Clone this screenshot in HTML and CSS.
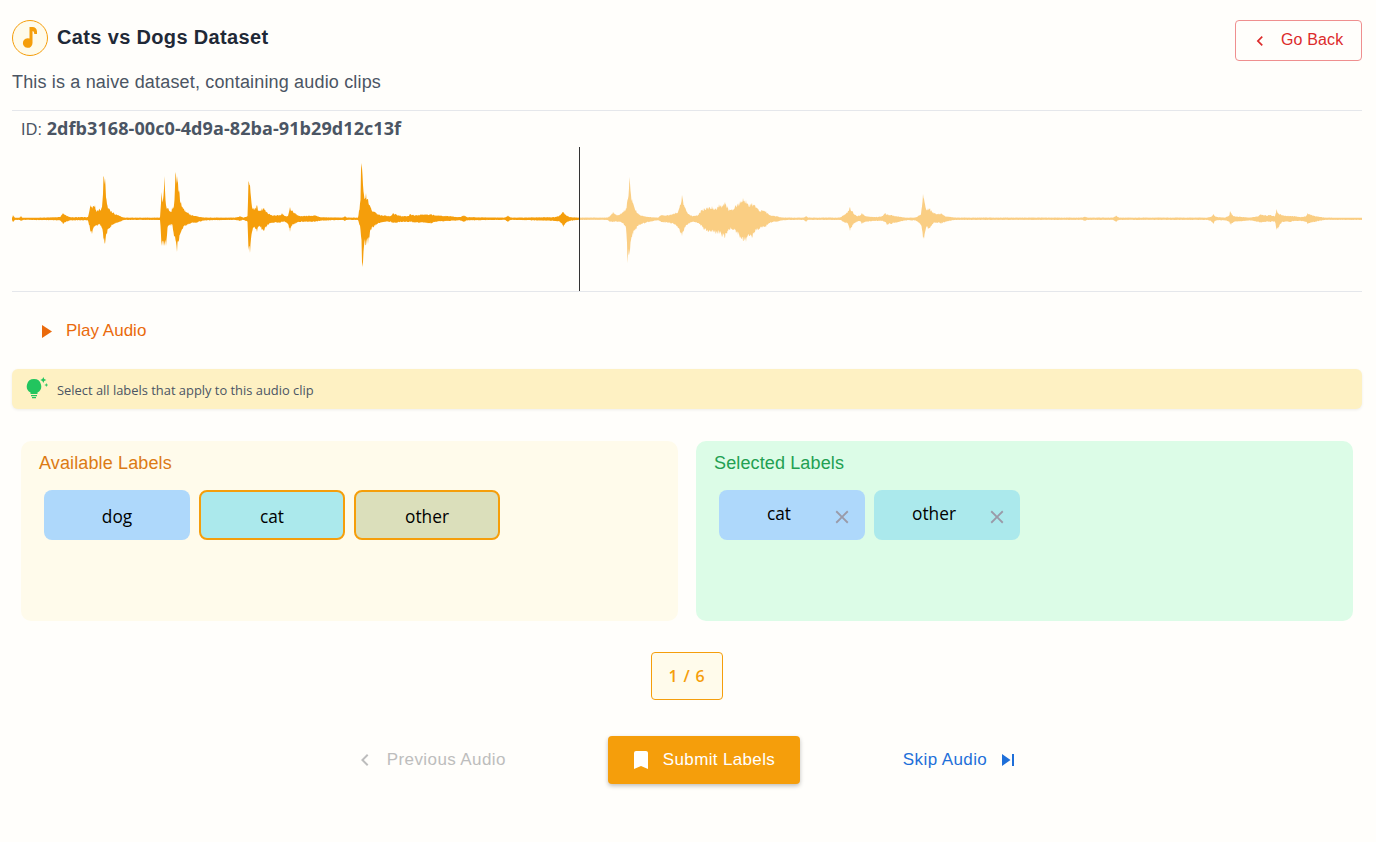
FILE: index.html
```html
<!DOCTYPE html>
<html lang="en">
<head>
<meta charset="utf-8">
<title>Cats vs Dogs Dataset</title>
<link rel="stylesheet" href="styles.css">
</head>
<body>
<main class="page">
  <header class="head">
    <div class="head-main">
      <div class="title-row">
        <span class="avatar"><svg viewBox="0 0 24 24" class="i-note"><path d="M11.500 1h3a4.500 4.500 0 0 1 4.500 4.500V8h-2.800V7.200A2.200 2.200 0 0 0 14.500 5V17a4.800 4.800 0 1 1-3-4.400z"/></svg></span>
        <h1 class="title">Cats vs Dogs Dataset</h1>
      </div>
      <p class="desc">This is a naive dataset, containing audio clips</p>
    </div>
    <button class="back"><svg viewBox="0 0 24 24" class="i-back"><path d="M15.41 16.58L10.83 12l4.58-4.59L14 6l-6 6 6 6z"/></svg><span>Go Back</span></button>
  </header>

  <section class="audio">
    <div class="clip-id">ID: <b>2dfb3168-00c0-4d9a-82ba-91b29d12c13f</b></div>
    <div class="wave">
      <svg id="wave" class="wave-svg" viewBox="12 147 1350 144" preserveAspectRatio="none"></svg>
      <div class="cursor"></div>
    </div>
  </section>

  <button class="play"><svg viewBox="0 0 10 13" class="i-play"><path d="M0 0v13l10-6.500z"/></svg><span>Play Audio</span></button>

  <div class="hint">
    <svg viewBox="0 0 22 24" class="i-bulb"><path class="bulb" d="M8 3a7.200 7.200 0 0 0-3.500 13.500V18h7v-1.500A7.200 7.200 0 0 0 8 3zM5 19h6v1.200H5zM6 21h4v1.200H6z"/><path class="bulb" d="M17.300 1l.9 2.100 2.100.9-2.100.9-.9 2.100-.9-2.100-2.100-.9 2.100-.9zM20.300 7l.6 1.400 1.400.6-1.400.6-.6 1.400-.6-1.400-1.400-.6 1.400-.6z"/></svg>
    <span>Select all labels that apply to this audio clip</span>
  </div>

  <section class="boards">
    <div class="board board-a">
      <h2 class="board-title">Available Labels</h2>
      <div class="chips">
        <button class="chip c-blue">dog</button>
        <button class="chip c-cyan picked">cat</button>
        <button class="chip c-olive picked">other</button>
      </div>
    </div>
    <div class="board board-s">
      <h2 class="board-title">Selected Labels</h2>
      <div class="chips">
        <div class="chip tag c-blue"><span>cat</span><svg viewBox="0 0 24 24" class="i-x"><path d="M19 6.41L17.59 5 12 10.590 6.410 5 5 6.410 10.590 12 5 17.590 6.410 19 12 13.410 17.590 19 19 17.590 13.410 12z"/></svg></div>
        <div class="chip tag c-cyan"><span>other</span><svg viewBox="0 0 24 24" class="i-x"><path d="M19 6.41L17.59 5 12 10.590 6.410 5 5 6.410 10.590 12 5 17.590 6.410 19 12 13.410 17.590 19 19 17.590 13.410 12z"/></svg></div>
      </div>
    </div>
  </section>

  <div class="counter-row"><div class="counter">1 / 6</div></div>

  <nav class="actions">
    <button class="act prev"><svg viewBox="0 0 24 24" class="i-24"><path d="M15.41 16.58L10.83 12l4.58-4.59L14 6l-6 6 6 6z"/></svg><span>Previous Audio</span></button>
    <button class="submit"><svg viewBox="0 0 24 24" class="i-24"><path d="M17 3H7a2 2 0 0 0-2 2v16l7-3 7 3V5c0-1.110-.9-2-2-2z"/></svg><span>Submit Labels</span></button>
    <button class="act skip"><span>Skip Audio</span><svg viewBox="0 0 24 24" class="i-24"><path d="M16 18h2V6h-2M6 18l8.500-6L6 6z"/></svg></button>
  </nav>
</main>
<script src="waveform.js"></script>
</body>
</html>
```
FILE: styles.css
```css
* { box-sizing: border-box; }
html, body { margin: 0; height: 100%; overflow: hidden; }
body { background: #fffefb; font-family: "Liberation Sans", Arial, sans-serif; color: #1f2937; }
button { font: inherit; background: none; border: 0; padding: 0; cursor: pointer; }
svg { display: block; fill: currentColor; }

.page { padding: 20px 14px 0 12px; }

.head { display: flex; justify-content: space-between; align-items: flex-start; height: 91px; border-bottom: 1px solid #e5e7eb; }
.title-row { display: flex; align-items: center; gap: 9px; height: 36px; }
.avatar { width: 36px; height: 36px; border: 1px solid #f59e0b; border-radius: 50%; background: #fffbeb; display: flex; align-items: center; justify-content: center; color: #f59e0b; }
.i-note { width: 24px; height: 24px; }
.title { margin: 0; padding-bottom: 2px; font-size: 20px; font-weight: 700; line-height: 34px; letter-spacing: .35px; color: #1f2937; }
.desc { margin: 13px 0 0; font-size: 18px; line-height: 26px; letter-spacing: .165px; color: #4b5563; }

.back { width: 127px; height: 41px; border: 1px solid #ef8f8f; border-radius: 4px; color: #dc2b2b; display: flex; align-items: center; padding: 0 0 2px 14px; font-size: 16px; letter-spacing: .15px; }
.i-back { width: 20px; height: 20px; margin: 2px 11px 0 0; }

.audio { border-bottom: 1px solid #e5e7eb; }
.clip-id { height: 36px; padding: 6px 0 0 9px; font-size: 16px; line-height: 22px; letter-spacing: .2px; color: #4b5563; }
.clip-id b { font-family: "Open Sans", "Noto Sans", sans-serif; font-size: 18px; font-weight: 700; letter-spacing: .08px; }
.wave { position: relative; height: 144px; }
.wave-svg { width: 100%; height: 100%; }
.cursor { position: absolute; left: 567px; top: 0; bottom: 0; width: 1px; background: #333; }

.play { display: flex; align-items: center; gap: 14px; margin: 28px 0 0 30px; height: 22px; color: #ea6a0c; font-size: 17px; }
.i-play { width: 10px; height: 13px; }

.hint { display: flex; align-items: center; gap: 9px; height: 40px; margin-top: 27px; padding-left: 14px; background: #fef1c3; border-radius: 6px; box-shadow: 0 1px 3px rgba(0,0,0,.07); font-family: "Open Sans", "Noto Sans", sans-serif; font-size: 12.900px; color: #4b5563; }
.hint span { margin-top: 2px; }
.i-bulb { width: 22px; height: 24px; margin-top: -2px; }
.bulb { fill: #22c55e; }

.boards { display: flex; gap: 18px; margin: 32px 9px 0; }
.board { flex: 1; height: 180px; border-radius: 10px; padding: 10px 18px; }
.board-a { background: #fffbeb; }
.board-s { background: #dcfce7; }
.board-title { margin: 0; font-size: 18px; font-weight: 400; line-height: 24px; letter-spacing: .13px; }
.board-a .board-title { color: #dc7a14; }
.board-s .board-title { color: #22a052; }
.chips { display: flex; gap: 9px; padding: 15px 5px 0; }
.chip { position: relative; width: 146px; height: 50px; padding-top: 2px; border-radius: 8px; display: flex; align-items: center; justify-content: center; font-family: "Open Sans", "Noto Sans", sans-serif; font-size: 17.300px; color: #000; }
.c-blue { background: #aed8fb; }
.c-cyan { background: #abe9ec; }
.c-olive { background: #dbdfbb; }
.picked { border: 2px solid #f59e0b; }
.tag span { margin: -5px 26px 0 0; }
.i-x { position: absolute; right: 12px; top: 16px; width: 22px; height: 22px; fill: #9a9aa8; }

.counter-row { display: flex; justify-content: center; margin-top: 31px; }
.counter { width: 72px; height: 48px; border: 1px solid #f59e0b; border-radius: 4px; background: #fffbeb; display: flex; align-items: center; justify-content: center; color: #f59e0b; font-family: "Open Sans", "Noto Sans", sans-serif; font-size: 16px; font-weight: 600; letter-spacing: .8px; }

.actions { display: flex; justify-content: center; align-items: center; margin-top: 36px; padding-right: 1px; }
.act { display: flex; align-items: center; font-size: 17px; letter-spacing: .4px; }
.i-24 { width: 24px; height: 24px; flex: none; }
.prev { color: #bdbdbd; margin-right: 102px; gap: 10px; }
.skip { color: #1e6fd9; margin-left: 103px; gap: 9px; }
.submit { width: 192px; height: 48px; border-radius: 4px; background: #f59e0b; color: #fff; display: flex; align-items: center; padding-left: 21px; gap: 10px; font-size: 17px; letter-spacing: .35px; box-shadow: 0 2px 4px rgba(0,0,0,.25); }
```
FILE: waveform.js
```js
// Envelope of the clip: [x, top y, bottom y]; the centre line is y = 218.7.
var env = [
  [12,218,220],[13,215,222],[15,218,220],[20,217.500,220],[21,216,221],[23,218,220],[60,217,220.500],[63,213,224],[66,215,222],[70,217,220.500],[88,217,220.500],
  [90.500,205,232],[92,206,234],[95,205,226],[97,211,226],[99,209,225],[102,207,228],[103.500,176,240],[105,178,244],[107,204,234],[110,210,228],[114,213,224],[120,216,222],[124,217.500,220],
  [160,217.500,220],[161.500,192,246],[163,200,246],[164.500,176,246],[166,205,246],[168,208,226],[171,212,226],[172,208,224],[174,205,236],[175.500,172,240],[177,176,252],[179,190,240],[181,202,232],[185,210,226],[190,214,224],[196,216,223],[205,217.500,220.500],
  [235,217.500,220],[240,216,221],[243,217.500,220],[247.500,216,222],[248.500,181,250],[250,185,253],[252,207,232],[255,208,228],[257,205,232],[259,211,226],[262,208,230],[264,208,231],[267,212,226],[272,215,223],[280,215,223],[282,213,222],[285,216,222],[288,216,224],[290,207,232],[292,210,226],[295,213,224],[300,216,222],[315,215,222],[320,217,221],
  [343,217.500,220],[345,216,221],[347,217.500,220],[358,217.500,220],[360.500,200,230],[361,170,236],[361.500,163,240],[362,168,262],[362.500,175,267],[363,185,262],[364,195,246],[366,193,245],[368,199,244],[371,208,230],[375,212,226],[380,215,223],[385,215,222],[390,216,222],[393,213,223],[396,214,223],[402,216,222],[408,216,222],[410,214,222],[415,215,223],[425,214,223],[431,214,224],[436,215,222],[450,216,221],
  [460,217,220.500],[464,215,222],[467,217,220.500],[505,217.500,220],[508,215.500,222],[511,217.500,220],[555,217,221],[560,215,222],[562.500,212,225],[563.500,212,227],[566,215,223],[570,217,221],
  [579,217.500,220],[607,217.500,220],[610,216,222],[613,212,222],[617,215,222],[621,213,222],[624,210,225],[626,208,228],[627.500,200,263],[629.500,177,255],[631,195,240],[633,203,235],[636,210,229],[640,215,225],[650,217,222],[658,217.500,220.500],
  [661,215,222],[668,215,223],[674,213,224],[678,212,228],[680,205,232],[682,195,236],[684,205,230],[687,212,225],[692,216,222],[698,215,223],[701,210,226],[704,208,230],[708,207,232],[712,206,232],[716,208,234],[719,204,234],[722,205,237],[725,202,238],[727,206,234],[730,210,230],[733,209,230],[736,205,233],[740,201,238],[743,198,241],[746,200,242],[749,204,236],[752,203,238],[755,205,232],[758,209,230],[762,210,228],[766,211,227],[770,215,223],[777,216,222],[782,217.500,220.500],
  [790,217.500,220],[804,217.500,220],[806,216,222],[808,217.500,220],[840,217.500,220],[845,214,223],[848,211,224],[850,207,231],[853,212,225],[857,216,222],[860,215,221],[862,213,224],[865,216,222],[875,217,221],[882,216,221],[885,213,222],[887,214,225],[892,215,224],[896,216,223],[905,217.500,220.500],
  [915,217.500,220.500],[918,216,222],[921,214,225],[923,194,238],[924,199,239],[926,209,228],[928,208,229],[930,208,228],[933,212,224],[937,214,223],[941,213,224],[945,216,222],[955,217.500,220],
  [1082,217.500,220],[1085,216.500,221],[1087,217.500,220],[1113,217.500,220],[1116,215.500,222],[1119,217.500,220],[1208,217.500,220],[1212,216,222],[1213.500,214,224],[1215,216,221],[1217,217,220.500],
  [1225,217.500,220.500],[1229.500,215,222],[1230,211,224],[1231,213,225],[1234,216,222],[1250,217.500,220.500],[1258,216,222],[1261,214,223],[1265,215,222],[1270,215,222],[1275,216,222],[1276.500,209,230],[1278,213,229],[1282,215,222],[1290,216,222],[1295,216,221],[1300,217,221],[1306,216,222],[1307.500,213,224],[1310,214,223],[1315,216,222],[1325,217.500,220],[1362,218,220]
];

// Samples the envelope every half pixel with seeded noise; control points keep their full height.
function build(from, to) {
  var seed = from * 31 + 7;
  function rnd() { seed = (seed * 16807) % 2147483647; return seed / 2147483647; }
  function amp(value, exact) {
    var noise = exact ? 1 : .74 + rnd() * .26;
    return Math.max(.9, value * noise);
  }
  var top = [], bottom = [], k = 0;
  for (var x = from; x <= to; x += 0.5) {
    while (k < env.length - 2 && env[k + 1][0] < x) k++;
    var a = env[k], b = env[k + 1], t = Math.max(0, Math.min(1, (x - a[0]) / (b[0] - a[0])));
    var up = a[1] + (b[1] - a[1]) * t, down = a[2] + (b[2] - a[2]) * t;
    var exact = t === 0 || t === 1;
    top.push(x + "," + (218.7 - amp(218.7 - up, exact)).toFixed(1));
    bottom.unshift(x + "," + (218.7 + amp(down - 218.7, exact)).toFixed(1));
  }
  return "M" + top.join("L") + "L" + bottom.join("L") + "Z";
}

var svg = document.getElementById("wave");
[[12, 579, 1], [579, 1362, .5]].forEach(function (part) {
  var p = document.createElementNS("http://www.w3.org/2000/svg", "path");
  p.setAttribute("d", build(part[0], part[1]));
  p.setAttribute("fill", "#f59e0b");
  p.setAttribute("fill-opacity", part[2]);
  svg.appendChild(p);
});
```
